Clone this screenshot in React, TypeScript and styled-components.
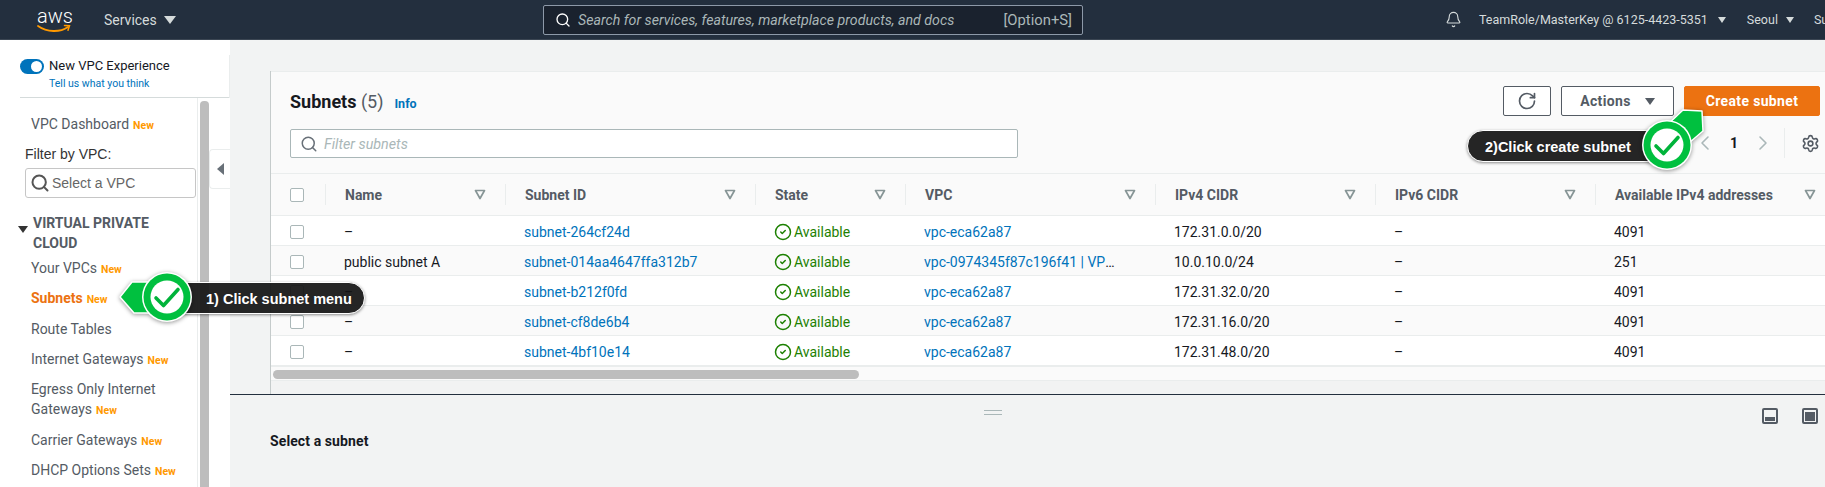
import React, { FC } from 'react';
import styled, { createGlobalStyle } from 'styled-components';
import { Bell, ChevronLeft, ChevronRight, CircleCheck, RotateCw, Search, Settings } from 'lucide-react';

const GlobalStyle = createGlobalStyle`
  html, body {
    margin: 0;
    padding: 0;
    background: #f2f3f3;
  }
  * {
    box-sizing: border-box;
  }
`;

const FONT = `Roboto, 'Liberation Sans', sans-serif`;
const HELV = `'Liberation Sans', Arial, sans-serif`;

const Page = styled.div`
  position: relative;
  width: 1825px;
  height: 487px;
  overflow: hidden;
  font-family: ${FONT};
  font-size: 14px;
  color: #16191f;
  display: flex;
  flex-direction: column;
`;

/* top bar */
const TopBar = styled.div`
  height: 40px;
  flex: none;
  background: #232f3e;
  border-bottom: 1px solid #3b4653;
  display: flex;
  align-items: center;
  color: #d5dbdb;
  font-size: 13px;
`;

const Logo = styled.div`
  width: 34px;
  flex: none;
  margin-left: 37px;
  height: 30px;
  position: relative;
  color: #fff;
  font-size: 20px;
  line-height: 22px;
  text-align: center;
  font-weight: 300;
`;

const Smile = styled.svg`
  display: block;
  position: absolute;
  left: 0;
  top: 19px;
`;

const ServicesMenu = styled.div`
  margin-left: 33px;
  width: 439px;
  flex: none;
  display: flex;
  align-items: center;
  gap: 7px;
  font-size: 14px;
`;

const Caret = styled.span<{ $size?: number; $color?: string }>`
  display: inline-block;
  width: 0;
  height: 0;
  border-left: ${p => p.$size ?? 5}px solid transparent;
  border-right: ${p => p.$size ?? 5}px solid transparent;
  border-top: ${p => (p.$size ?? 5) + 2}px solid ${p => p.$color ?? '#d5dbdb'};
`;

const SearchBox = styled.div`
  width: 540px;
  flex: none;
  height: 30px;
  background: #1a222e;
  border: 1px solid #8d99a8;
  border-radius: 2px;
  display: flex;
  align-items: center;
  padding: 0 10px 0 11px;
  color: #aab7b8;
  font-size: 14.2px;
  gap: 7px;
`;

const SearchHint = styled.span`
  font-style: italic;
  flex: 1;
`;

const SearchShortcut = styled.span`
  font-size: 14.8px;
`;

const TopRight = styled.div`
  margin-left: 362px;
  flex: none;
  display: flex;
  align-items: center;
  white-space: nowrap;
`;

const AccountMenu = styled.span<{ $gap: number; $ml: number }>`
  display: inline-flex;
  align-items: center;
  gap: ${p => p.$gap}px;
  margin-left: ${p => p.$ml}px;
  font-size: 12.5px;
`;

/* body */
const Body = styled.div`
  flex: 1;
  display: flex;
  min-height: 0;
`;

const Sidebar = styled.aside`
  position: relative;
  width: 230px;
  flex: none;
  background: #fff;
  display: flex;
  flex-direction: column;
`;

const ExperienceBlock = styled.div`
  height: 58px;
  margin-left: 20px;
  padding-top: 18px;
  border-bottom: 1px solid #d5dbdb;
`;

const ExperienceInner = styled.div`
  border-right: 1px solid #eaeded;
  margin-top: -3px;
  height: 43px;
  padding-top: 3px;
`;

const ToggleRow = styled.div`
  display: flex;
  align-items: center;
  gap: 5px;
  font-size: 13px;
  line-height: 16px;
  color: #16191f;
`;

const Toggle = styled.span`
  display: block;
  width: 24px;
  height: 15px;
  border-radius: 8px;
  background: #0073bb;
  position: relative;
  &::after {
    content: '';
    position: absolute;
    right: 2px;
    top: 2px;
    width: 11px;
    height: 11px;
    border-radius: 50%;
    background: #fff;
  }
`;

const FeedbackLink = styled.a`
  display: block;
  margin: 3px 0 0 29px;
  font-size: 10.5px;
  line-height: 14px;
  color: #0073bb;
`;

const SidebarLower = styled.div`
  flex: 1;
  display: flex;
  min-height: 0;
`;

const NavColumn = styled.nav`
  width: 198px;
  flex: none;
  padding: 10.7px 0 0 0;
  border-right: 1px solid #eaeded;
`;

const NavItem = styled.div<{ $active?: boolean }>`
  padding: 5.15px 8px 5.15px 31px;
  line-height: 20px;
  font-size: 14px;
  color: ${p => (p.$active ? '#ec7211' : '#545b64')};
  font-weight: ${p => (p.$active ? 700 : 400)};
`;

const NewTag = styled.span`
  color: #ff9900;
  font-size: 10.5px;
  line-height: 1;
  font-weight: 700;
  margin-left: 4px;
`;

const FilterLabel = styled.div`
  margin: 6px 0 5px 25px;
  font-family: ${HELV};
  font-size: 14px;
  line-height: 18px;
  color: #333;
`;

const VpcSelect = styled.div`
  margin-left: 25px;
  width: 171px;
  height: 30px;
  border: 1px solid #c6c6c6;
  border-radius: 3px;
  display: flex;
  align-items: center;
  gap: 2px;
  padding-left: 4px;
  font-family: ${HELV};
  font-size: 14px;
  color: #666;
`;

const SectionHead = styled.div`
  position: relative;
  margin: 15px 0 0 0;
  padding: 0 30px 0 33px;
  font-size: 14px;
  line-height: 20px;
  font-weight: 700;
  color: #545b64;
`;

const SectionCaret = styled.span`
  position: absolute;
  left: 18px;
  top: 13px;
  display: flex;
`;

const ScrollTrack = styled.div`
  flex: 1;
  padding: 3px 21px 0 2px;
`;

const ScrollThumb = styled.div`
  height: 100%;
  border-radius: 4px 4px 0 0;
  background: #bdbdbd;
`;

const CollapseTab = styled.div`
  position: absolute;
  left: 209px;
  top: 109px;
  width: 21px;
  height: 40px;
  background: #fff;
  border: 1px solid #eaeded;
  border-right: none;
  border-radius: 4px 0 0 4px;
  display: flex;
  align-items: center;
  justify-content: center;
  &::before {
    content: '';
    border-top: 6px solid transparent;
    border-bottom: 6px solid transparent;
    border-right: 7px solid #687078;
  }
`;

/* main */
const Main = styled.main`
  flex: 1;
  min-width: 0;
  display: flex;
  flex-direction: column;
`;

const ContentArea = styled.div`
  height: 355px;
  flex: none;
  padding: 31px 0 0 40px;
  border-bottom: 1px solid #232f3e;
`;

const Panel = styled.section`
  height: 100%;
  border-left: 1px solid #c5cbcb;
  overflow: hidden;
`;

const PanelTop = styled.div`
  height: 102px;
  background: #fafafa;
  border-top: 1px solid #eaeded;
  padding: 14px 5px 0 19px;
  display: flex;
  justify-content: space-between;
`;

const TitleBlock = styled.div`
  display: flex;
  flex-direction: column;
`;

const TitleRow = styled.div`
  height: 43px;
  display: flex;
  align-items: baseline;
  gap: 11px;
  padding-top: 5px;
`;

const Title = styled.h1`
  margin: 0;
  font-size: 18px;
  font-weight: 700;
  color: #16191f;
`;

const Count = styled.span`
  font-weight: 400;
  color: #545b64;
`;

const InfoLink = styled.a`
  font-size: 12.5px;
  font-weight: 700;
  color: #0073bb;
`;

const FilterBox = styled.div`
  width: 728px;
  height: 29px;
  background: #fff;
  border: 1px solid #aab7b8;
  border-radius: 2px;
  display: flex;
  align-items: center;
  gap: 6px;
  padding-left: 9px;
  color: #aab7b8;
  font-size: 14.3px;
  font-style: italic;
`;

const ActionsBlock = styled.div`
  display: flex;
  flex-direction: column;
  align-items: flex-end;
`;

const ButtonRow = styled.div`
  display: flex;
  gap: 10px;
`;

const OutlineButton = styled.button<{ $w: number }>`
  width: ${p => p.$w}px;
  height: 30px;
  background: #fff;
  border: 1px solid #545b64;
  border-radius: 2px;
  color: #545b64;
  font-family: ${FONT};
  font-size: 14px;
  font-weight: 700;
  letter-spacing: 0.35px;
  display: flex;
  align-items: center;
  justify-content: center;
  gap: 14px;
  padding: 0;
`;

const PrimaryButton = styled(OutlineButton)`
  background: #ec7211;
  border-color: #ec7211;
  color: #fff;
`;

const PagerRow = styled.div`
  height: 30px;
  margin-top: 12px;
  display: flex;
  align-items: center;
  color: #16191f;
  font-weight: 700;
  font-size: 14px;
`;

const PagerNum = styled.span`
  width: 34px;
  text-align: center;
`;

const PagerRule = styled.span`
  height: 30px;
  width: 1px;
  background: #eaeded;
  margin: 0 16px 0 9px;
`;

const COLUMNS = '54px 180px 250px 150px 250px 220px 220px 240px';

const HeadRow = styled.div`
  height: 43px;
  display: grid;
  grid-template-columns: ${COLUMNS};
  align-items: center;
  background: #fafafa;
  border-top: 1px solid #eaeded;
  border-bottom: 1px solid #eaeded;
`;

const HeadCell = styled.div`
  height: 21px;
  display: flex;
  align-items: center;
  justify-content: space-between;
  padding: 0 19px 0 19px;
  border-left: 1px solid #eaeded;
  font-weight: 700;
  font-size: 14px;
  color: #545b64;
  white-space: nowrap;
`;

const Row = styled.div<{ $alt?: boolean }>`
  height: 30px;
  padding-top: 2px;
  display: grid;
  grid-template-columns: ${COLUMNS};
  align-items: center;
  background: ${p => (p.$alt ? '#fafafa' : '#fff')};
  border-bottom: 1px solid #eaeded;
`;

const CheckCell = styled.div`
  padding-left: 19px;
  display: flex;
`;

const CheckBox = styled.span`
  display: block;
  width: 14px;
  height: 14px;
  background: #fff;
  border: 1px solid #aab7b8;
  border-radius: 2px;
`;

const Cell = styled.div`
  padding-left: 19px;
  font-size: 14px;
  white-space: nowrap;
`;

const LinkCell = styled(Cell)`
  overflow: hidden;
  text-overflow: ellipsis;
  padding-right: 33px;
`;

const CellLink = styled.a`
  color: #0073bb;
`;

const StatusCell = styled(Cell)`
  color: #1d8102;
  display: flex;
  align-items: center;
  gap: 2px;
`;

const TableFoot = styled.div`
  height: 15px;
  background: #fafafa;
  border-top: 1px solid #eaeded;
  border-bottom: 1px solid #eaeded;
  padding: 3px 0 0 2px;
`;

const HScrollThumb = styled.div`
  width: 586px;
  height: 9px;
  border-radius: 5px;
  background: #bdbdbd;
`;

/* split panel */
const SplitPanel = styled.div`
  flex: 1;
  background: #f2f3f3;
  padding: 0 0 0 40px;
  position: relative;
`;

const SplitTools = styled.div`
  display: flex;
  align-items: flex-start;
  height: 36px;
  padding: 13px 7px 0 0;
  justify-content: flex-end;
  gap: 24px;
`;

const DragHandle = styled.div`
  position: absolute;
  left: 754px;
  top: 15px;
  width: 18px;
  height: 5px;
  border-top: 1px solid #aab7b8;
  border-bottom: 1px solid #aab7b8;
`;

const SplitTitle = styled.h2`
  margin: 0;
  font-size: 14px;
  line-height: 20px;
  font-weight: 700;
  letter-spacing: 0.1px;
  color: #16191f;
`;

/* tutorial callouts */
const Pill = styled.div<{ $x: number; $y: number; $w: number; $pad: number }>`
  position: absolute;
  left: ${p => p.$x}px;
  top: ${p => p.$y}px;
  width: ${p => p.$w}px;
  height: 32px;
  padding-left: ${p => p.$pad}px;
  background: rgba(20, 20, 20, 0.93);
  border: 1px solid #fff;
  border-radius: 16px;
  box-shadow: 0 1px 3px rgba(0, 0, 0, 0.45);
  color: #fff;
  font-family: ${HELV};
  font-size: 14.5px;
  font-weight: 700;
  line-height: 32px;
  white-space: nowrap;
`;

const PinSvg = styled.svg<{ $x: number; $y: number }>`
  position: absolute;
  left: ${p => p.$x}px;
  top: ${p => p.$y}px;
  filter: drop-shadow(0 1px 2px rgba(0, 0, 0, 0.4));
`;

const SortIcon: FC = () => (
  <svg width="12" height="11" viewBox="0 0 12 11">
    <path d="M1.5 1.5h9L6 9.5z" fill="none" stroke="#879596" strokeWidth="1.7" strokeLinejoin="round" />
  </svg>
);

const PaneIcon: FC<{ fill: number }> = ({ fill }) => (
  <svg width="16" height="16" viewBox="0 0 16 16">
    <rect x="1" y="1" width="14" height="14" rx="1" fill="none" stroke="#545b64" strokeWidth="2" />
    <rect x="3" y={13 - fill} width="10" height={fill} fill="#545b64" />
  </svg>
);

const Pin: FC<{ x: number; y: number; w: number; h: number; d: string; cx: number; cy: number }> = ({ x, y, w, h, d, cx, cy }) => (
  <PinSvg $x={x} $y={y} width={w} height={h} viewBox={`0 0 ${w} ${h}`}>
    <path d={d} fill="#00c03f" stroke="#fff" strokeWidth="1.5" strokeLinejoin="round" />
    <circle cx={cx} cy={cy} r="25" fill="#fff" />
    <circle cx={cx} cy={cy} r="23.5" fill="#00c03f" />
    <circle cx={cx} cy={cy} r="16.5" fill="#fff" />
    <path
      d={`M${cx - 11} ${cy + 1}l7.5 7.5l14.5 -16`}
      fill="none"
      stroke="#00b33a"
      strokeWidth="3.6"
      strokeLinecap="round"
      strokeLinejoin="round"
    />
  </PinSvg>
);

const NavEntry: FC<{ label: string; active?: boolean }> = ({ label, active }) => (
  <NavItem $active={active}>
    {label}
    <NewTag>New</NewTag>
  </NavItem>
);

const HEADERS = ['Name', 'Subnet ID', 'State', 'VPC', 'IPv4 CIDR', 'IPv6 CIDR', 'Available IPv4 addresses'];

const SUBNETS = [
  { name: '–', id: 'subnet-264cf24d', vpc: 'vpc-eca62a87', cidr: '172.31.0.0/20', free: '4091' },
  { name: 'public subnet A', id: 'subnet-014aa4647ffa312b7', vpc: 'vpc-0974345f87c196f41 | VPC-Lab', cidr: '10.0.10.0/24', free: '251' },
  { name: '–', id: 'subnet-b212f0fd', vpc: 'vpc-eca62a87', cidr: '172.31.32.0/20', free: '4091' },
  { name: '–', id: 'subnet-cf8de6b4', vpc: 'vpc-eca62a87', cidr: '172.31.16.0/20', free: '4091' },
  { name: '–', id: 'subnet-4bf10e14', vpc: 'vpc-eca62a87', cidr: '172.31.48.0/20', free: '4091' },
];

const App: FC = () => (
  <Page>
    <GlobalStyle />
    <TopBar>
      <Logo>
        aws
        <Smile width="34" height="10" viewBox="0 0 34 10">
          <path d="M1 2c9 6.5 22 6.5 30 1" fill="none" stroke="#f90" strokeWidth="1.8" strokeLinecap="round" />
          <path d="M27.5 1.5l5 .2-1.5 4.6" fill="none" stroke="#f90" strokeWidth="1.5" strokeLinecap="round" />
        </Smile>
      </Logo>
      <ServicesMenu>
        Services <Caret $size={6} />
      </ServicesMenu>
      <SearchBox>
        <Search size={16} color="#fff" strokeWidth={2} />
        <SearchHint>Search for services, features, marketplace products, and docs</SearchHint>
        <SearchShortcut>[Option+S]</SearchShortcut>
      </SearchBox>
      <TopRight>
        <Bell size={17} strokeWidth={1.6} />
        <AccountMenu $gap={10} $ml={17}>
          TeamRole/MasterKey @ 6125-4423-5351 <Caret $size={4} />
        </AccountMenu>
        <AccountMenu $gap={8} $ml={21}>
          Seoul <Caret $size={4} />
        </AccountMenu>
        <AccountMenu $gap={0} $ml={20}>
          Support
        </AccountMenu>
      </TopRight>
    </TopBar>

    <Body>
      <Sidebar>
        <ExperienceBlock>
          <ExperienceInner>
            <ToggleRow>
              <Toggle />
              New VPC Experience
            </ToggleRow>
            <FeedbackLink>Tell us what you think</FeedbackLink>
          </ExperienceInner>
        </ExperienceBlock>
        <SidebarLower>
          <NavColumn>
            <NavEntry label="VPC Dashboard" />
            <FilterLabel>Filter by VPC:</FilterLabel>
            <VpcSelect>
              <Search size={20} color="#555" strokeWidth={2.4} />
              Select a VPC
            </VpcSelect>
            <SectionHead>
              <SectionCaret>
                <Caret $size={5} $color="#333" />
              </SectionCaret>
              VIRTUAL PRIVATE CLOUD
            </SectionHead>
            <NavEntry label="Your VPCs" />
            <NavEntry label="Subnets" active />
            <NavItem>Route Tables</NavItem>
            <NavEntry label="Internet Gateways" />
            <NavEntry label="Egress Only Internet Gateways" />
            <NavEntry label="Carrier Gateways" />
            <NavEntry label="DHCP Options Sets" />
          </NavColumn>
          <ScrollTrack>
            <ScrollThumb />
          </ScrollTrack>
        </SidebarLower>
        <CollapseTab />
      </Sidebar>

      <Main>
        <ContentArea>
          <Panel>
            <PanelTop>
              <TitleBlock>
                <TitleRow>
                  <Title>
                    Subnets <Count>(5)</Count>
                  </Title>
                  <InfoLink>Info</InfoLink>
                </TitleRow>
                <FilterBox>
                  <Search size={18} color="#687078" strokeWidth={2} />
                  Filter subnets
                </FilterBox>
              </TitleBlock>
              <ActionsBlock>
                <ButtonRow>
                  <OutlineButton $w={48}>
                    <RotateCw size={20} strokeWidth={2} />
                  </OutlineButton>
                  <OutlineButton $w={113}>
                    Actions <Caret $size={5} $color="#545b64" />
                  </OutlineButton>
                  <PrimaryButton $w={136}>Create subnet</PrimaryButton>
                </ButtonRow>
                <PagerRow>
                  <ChevronLeft size={24} color="#aab7b8" strokeWidth={1.6} />
                  <PagerNum>1</PagerNum>
                  <ChevronRight size={24} color="#aab7b8" strokeWidth={1.6} />
                  <PagerRule />
                  <Settings size={19} color="#545b64" strokeWidth={2} />
                </PagerRow>
              </ActionsBlock>
            </PanelTop>
            <HeadRow>
              <CheckCell>
                <CheckBox />
              </CheckCell>
              {HEADERS.map(h => (
                <HeadCell key={h}>
                  {h}
                  <SortIcon />
                </HeadCell>
              ))}
            </HeadRow>
            {SUBNETS.map((s, i) => (
              <Row key={s.id} $alt={i % 2 === 1}>
                <CheckCell>
                  <CheckBox />
                </CheckCell>
                <Cell>{s.name}</Cell>
                <LinkCell>
                  <CellLink>{s.id}</CellLink>
                </LinkCell>
                <StatusCell>
                  <CircleCheck size={18} strokeWidth={2} />
                  Available
                </StatusCell>
                <LinkCell>
                  <CellLink>{s.vpc}</CellLink>
                </LinkCell>
                <Cell>{s.cidr}</Cell>
                <Cell>–</Cell>
                <Cell>{s.free}</Cell>
              </Row>
            ))}
            <TableFoot>
              <HScrollThumb />
            </TableFoot>
          </Panel>
        </ContentArea>
        <SplitPanel>
          <DragHandle />
          <SplitTools>
            <PaneIcon fill={4} />
            <PaneIcon fill={9} />
          </SplitTools>
          <SplitTitle>Select a subnet</SplitTitle>
        </SplitPanel>
      </Main>
    </Body>

    <Pill $x={170} $y={282} $w={195} $pad={35}>
      1) Click subnet menu
    </Pill>
    <Pin x={116} y={268} w={80} h={58} d="M4 29L16 14h40v31H18z" cx={51} cy={29} />

    <Pill $x={1467} $y={130} $w={200} $pad={17}>
      2)Click create subnet
    </Pill>
    <Pin x={1638} y={104} w={68} h={70} d="M45 6l19 1 1 20-14 12-24-16z" cx={29} cy={41} />
  </Page>
);

export default App;
